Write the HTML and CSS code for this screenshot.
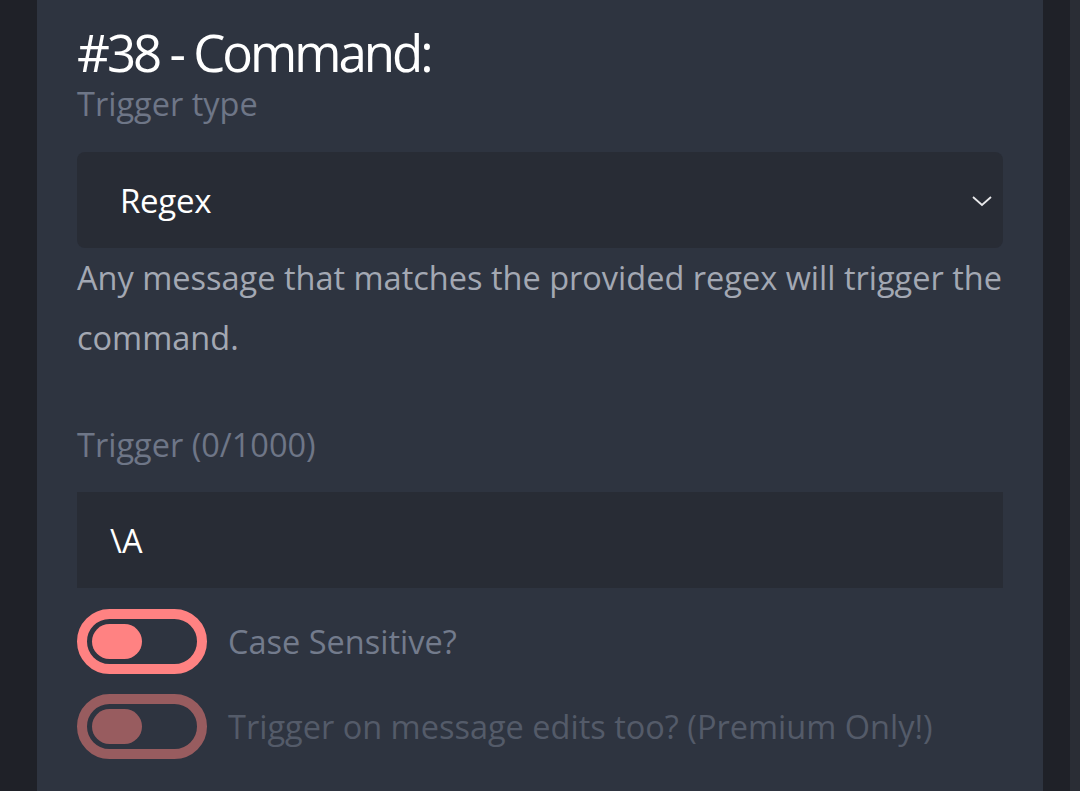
FILE: index.html
```html
<!DOCTYPE html>
<html>
<head>
<meta charset="utf-8">
<link rel="stylesheet" href="styles.css">
</head>
<body>
<div class="page">
  <div class="side-left"></div>
  <main class="panel">
    <h1 class="title">#38 - Command:</h1>
    <div class="label label-top">Trigger type</div>
    <div class="select">
      <span class="select-value">Regex</span>
      <svg class="chevron" width="22" height="14" viewBox="0 0 22 14"><path d="M2 3 L11 11 L20 3" fill="none" stroke="#e8e8ea" stroke-width="1.8"/></svg>
    </div>
    <p class="desc">Any message that matches the provided regex will trigger the command.</p>
    <div class="label label-trigger">Trigger (0/1000)</div>
    <div class="input">\A</div>
    <div class="toggle-row">
      <div class="toggle"><div class="knob"></div></div>
      <span class="toggle-label">Case Sensitive?</span>
    </div>
    <div class="toggle-row disabled">
      <div class="toggle"><div class="knob"></div></div>
      <span class="toggle-label">Trigger on message edits too? (Premium Only!)</span>
    </div>
  </main>
  <div class="side-right"></div>
  <div class="side-edge"></div>
</div>
</body>
</html>
```
FILE: styles.css
```css
html, body {
  margin: 0;
  padding: 0;
  height: 100%;
  overflow: hidden;
  background: #1f2128;
}
.page {
  display: flex;
  height: 791px;
  font-family: "Open Sans", "Noto Sans", sans-serif;
}
.side-left {
  width: 37px;
  background: #1f2128;
}
.panel {
  width: 1006px;
  box-sizing: border-box;
  padding: 0 40px;
  background: #2e3440;
  display: flex;
  flex-direction: column;
}
.side-right {
  width: 27px;
  background: #1f2128;
}
.side-edge {
  width: 10px;
  background: #2a2d35;
}
.title {
  margin: 28px 0 0 0;
  font-size: 51px;
  font-weight: 500;
  letter-spacing: -3px;
  color: #ffffff;
  line-height: 48px;
}
.label {
  font-size: 32.5px;
  color: #6e7687;
  line-height: 44px;
}
.label-top {
  margin-top: 6px;
}
.select {
  margin-top: 26px;
  height: 96px;
  background: #282c35;
  border-radius: 8px;
  display: flex;
  align-items: center;
  justify-content: space-between;
  padding: 0 10px 0 43px;
}
.select-value {
  font-size: 33px;
  color: #ffffff;
  letter-spacing: -0.3px;
}
.chevron {
  margin-top: 2px;
}
.desc {
  margin: 0;
  font-size: 32.5px;
  line-height: 60px;
  color: #a3a8b3;
}
.label-trigger {
  margin-top: 55px;
}
.input {
  margin-top: 25px;
  height: 96px;
  background: #282c35;
  display: flex;
  align-items: center;
  padding-left: 33px;
  font-size: 32.5px;
  color: #ffffff;
}
.toggle-row {
  display: flex;
  align-items: center;
  gap: 21px;
  margin-top: 21px;
}
.toggle-row + .toggle-row {
  margin-top: 20px;
}
.toggle {
  width: 130px;
  height: 65px;
  box-sizing: border-box;
  border: 10px solid #ff8282;
  border-radius: 33px;
  padding: 5px;
  display: flex;
  align-items: center;
}
.knob {
  width: 50px;
  height: 35px;
  border-radius: 18px;
  background: #ff8282;
}
.toggle-label {
  font-size: 32.5px;
  color: #737b8c;
}
.disabled .toggle {
  border-color: #985c5f;
}
.disabled .knob {
  background: #985c5f;
}
.disabled .toggle-label {
  color: #545b69;
}
```
